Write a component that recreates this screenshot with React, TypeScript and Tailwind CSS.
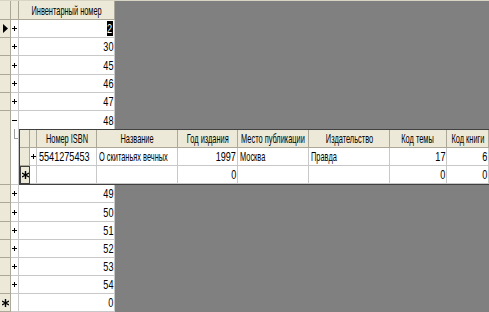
import React from "react";

type O = "l" | "r" | "c";

function T({ children, o = "c", num }: { children: React.ReactNode; o?: O; num?: boolean }) {
  const origin = o === "l" ? "origin-left" : o === "r" ? "origin-right" : "origin-center";
  const sc = num ? "scale-x-[0.7]" : "scale-x-[0.57]";
  return <span className={`inline-block shrink-0 whitespace-nowrap ${sc} ${origin}`}>{children}</span>;
}

const Plus = () => (
  <svg width="5" height="5" viewBox="0 0 5 5" className="block">
    <rect x="2" y="0" width="1" height="5" fill="#000" />
    <rect x="0" y="2" width="5" height="1" fill="#000" />
  </svg>
);

const Minus = () => (
  <svg width="5" height="5" viewBox="0 0 5 5" className="block">
    <rect x="0" y="2" width="5" height="1" fill="#000" />
  </svg>
);

const Arrow = () => (
  <svg width="5" height="9" viewBox="0 0 5 9" className="block">
    <polygon points="0,0 5,4.5 0,9" fill="#000" />
  </svg>
);

const Star = () => (
  <svg width="7" height="8" viewBox="0 0 7 8" className="block">
    <path d="M3.5 0 V8 M0 2 L7 6 M0 6 L7 2" stroke="#000" strokeWidth="1.4" />
  </svg>
);

function MainRow({
  h,
  sel,
  exp,
  value,
  selected,
}: {
  h: string;
  sel?: React.ReactNode;
  exp?: React.ReactNode;
  value: string;
  selected?: boolean;
}) {
  return (
    <div className={`flex ${h}`}>
      <div className="w-[11px] shrink-0 bg-[#ece9d8] border-r border-b border-[#aca899] flex items-center justify-center">
        {sel}
      </div>
      <div className="w-[8px] shrink-0 bg-white border-r border-b border-[#c8c8c8] flex items-center justify-center">
        {exp}
      </div>
      <div className="w-[96px] shrink-0 bg-white border-r border-b border-[#c8c8c8] flex items-center justify-end pr-[1px] overflow-hidden">
        {selected ? (
          <span className="bg-black text-white h-[15px] w-[6px] flex items-center justify-center">
            <T o="c" num>
              {value}
            </T>
          </span>
        ) : (
          <T o="r" num>
            {value}
          </T>
        )}
      </div>
    </div>
  );
}

const cols = [
  { w: "w-[60px]", t: "Номер ISBN" },
  { w: "w-[81px]", t: "Название" },
  { w: "w-[60px]", t: "Год издания" },
  { w: "w-[71px]", t: "Место публикации" },
  { w: "w-[81px]", t: "Издательство" },
  { w: "w-[57px]", t: "Код темы" },
  { w: "w-[42px]", t: "Код книги" },
];

function SubCell({ w, o, num, children }: { w: string; o: O; num?: boolean; children?: React.ReactNode }) {
  const j = o === "l" ? "justify-start pl-[2px]" : o === "r" ? "justify-end pr-[1px]" : "justify-center";
  return (
    <div className={`${w} shrink-0 h-full bg-white border-r border-b border-[#c8c8c8] flex items-center overflow-hidden ${j}`}>
      {children !== undefined && (
        <T o={o} num={num}>
          {children}
        </T>
      )}
    </div>
  );
}

export default function App() {
  const row1: [string, O, boolean][] = [
    ["5541275453", "l", true],
    ["О скитаньях вечных", "l", false],
    ["1997", "r", true],
    ["Москва", "l", false],
    ["Правда", "l", false],
    ["17", "r", true],
    ["6", "r", true],
  ];
  const row2: [string | undefined, O][] = [
    [undefined, "l"],
    [undefined, "l"],
    ["0", "r"],
    [undefined, "l"],
    [undefined, "l"],
    ["0", "r"],
    ["0", "r"],
  ];
  return (
    <div className="w-[489px] h-[312px] bg-[#808080] overflow-hidden flex flex-col font-['Liberation_Sans',sans-serif] text-[13px] leading-none text-black">
      <div className="h-px w-full shrink-0 bg-[#d8d5c5]" />
      {/* header */}
      <div className="flex h-[19px] shrink-0">
        <div className="w-[11px] shrink-0 bg-[#ece9d8] border-r border-b border-[#aca899]" />
        <div className="w-[8px] shrink-0 bg-[#ece9d8] border-r border-b border-[#aca899]" />
        <div className="w-[96px] shrink-0 bg-[#ece9d8] border-r border-b border-[#aca899] flex items-center justify-center">
          <T o="c">Инвентарный номер</T>
        </div>
      </div>
      <MainRow h="h-[18px]" sel={<Arrow />} exp={<Plus />} value="2" selected />
      <MainRow h="h-[18px]" exp={<Plus />} value="30" />
      <MainRow h="h-[19px]" exp={<Plus />} value="45" />
      <MainRow h="h-[18px]" exp={<Plus />} value="46" />
      <MainRow h="h-[18px]" exp={<Plus />} value="47" />
      {/* row 48 (expanded) */}
      <div className="flex h-[18px] shrink-0">
        <div className="w-[11px] shrink-0 bg-[#ece9d8] border-r border-[#aca899]" />
        <div className="w-[8px] shrink-0 bg-white border-r border-[#c8c8c8] flex items-center justify-center">
          <Minus />
        </div>
        <div className="w-[96px] shrink-0 bg-white border-r border-[#c8c8c8] flex items-center justify-end pr-[1px]">
          <T o="r" num>
            48
          </T>
        </div>
      </div>
      {/* subdatasheet */}
      <div className="flex h-[56px] shrink-0">
        <div className="w-[11px] shrink-0 bg-[#ece9d8] border-r border-b border-[#aca899]" />
        <div className="w-[8px] shrink-0 bg-white border-r border-b border-[#c8c8c8] relative">
          <div className="absolute left-[3px] top-0 w-px h-[10px] bg-[#a0a0a0]" />
          <div className="absolute left-[3px] top-[9px] w-[4px] h-px bg-[#a0a0a0]" />
        </div>
        <div className="w-[470px] shrink-0 flex flex-col bg-white border-l border-t border-b border-[#404040]">
          <div className="flex h-[18px] shrink-0">
            <div className="w-[10px] shrink-0 bg-[#ece9d8] border-r border-b border-[#aca899]" />
            <div className="w-[7px] shrink-0 bg-[#ece9d8] border-r border-b border-[#aca899]" />
            {cols.map((c) => (
              <div
                key={c.t}
                className={`${c.w} shrink-0 bg-[#ece9d8] border-r border-b border-[#aca899] flex items-center justify-center overflow-hidden`}
              >
                <T o="c">{c.t}</T>
              </div>
            ))}
          </div>
          <div className="flex h-[18px] shrink-0">
            <div className="w-[10px] shrink-0 bg-[#ece9d8] border-r border-b border-[#aca899]" />
            <div className="w-[7px] shrink-0 bg-white border-r border-b border-[#c8c8c8] flex items-center justify-center">
              <Plus />
            </div>
            {row1.map(([v, o, n], i) => (
              <SubCell key={i} w={cols[i].w} o={o} num={n}>
                {v}
              </SubCell>
            ))}
          </div>
          <div className="flex h-[18px] shrink-0">
            <div className="w-[10px] shrink-0 bg-[#ece9d8] border border-[#404040] flex items-center justify-center">
              <Star />
            </div>
            <div className="w-[7px] shrink-0 bg-white border-r border-b border-[#c8c8c8]" />
            {row2.map(([v, o], i) => (
              <SubCell key={i} w={cols[i].w} o={o} num>
                {v}
              </SubCell>
            ))}
          </div>
        </div>
      </div>
      <MainRow h="h-[18px]" exp={<Plus />} value="49" />
      <MainRow h="h-[19px]" exp={<Plus />} value="50" />
      <MainRow h="h-[18px]" exp={<Plus />} value="51" />
      <MainRow h="h-[18px]" exp={<Plus />} value="52" />
      <MainRow h="h-[18px]" exp={<Plus />} value="53" />
      <MainRow h="h-[18px]" exp={<Plus />} value="54" />
      <MainRow h="h-[18px]" sel={<Star />} value="0" />
    </div>
  );
}
